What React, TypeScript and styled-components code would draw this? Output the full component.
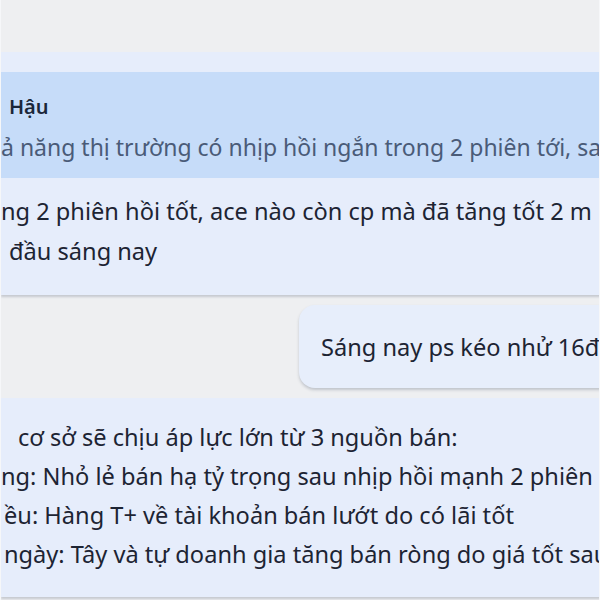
import React from "react";
import styled, { createGlobalStyle } from "styled-components";

const GlobalStyle = createGlobalStyle`
  html, body {
    margin: 0;
    padding: 0;
    background: #eeeff1;
    overflow: hidden;
  }
  body {
    font-family: "Noto Sans", "Open Sans", sans-serif;
    color: #1d2433;
  }
`;

const Page = styled.div`
  width: 600px;
  height: 600px;
  overflow: hidden;
  display: flex;
  flex-direction: column;
  gap: 10px;
  padding-top: 52px;
  box-sizing: border-box;
  background: #eeeff1;
  border-left: 1px solid #f6f7f9;
  border-right: 1px solid #f6f7f9;
`;

const Bubble = styled.div<{ $top: number; $bottom: number }>`
  width: 640px;
  flex-shrink: 0;
  background: #e6edfb;
  padding: ${(p) => p.$top}px 0 ${(p) => p.$bottom}px 0;
  box-shadow: 0 2px 2px rgba(60, 70, 90, 0.22);
  white-space: nowrap;
  overflow: hidden;
`;

const Quote = styled.div`
  background: #c6dcf9;
  padding: 22px 0 14px 0;
  display: flex;
  flex-direction: column;
  gap: 10px;
`;

const QuoteName = styled.div`
  font-size: 20px;
  font-weight: 600;
  line-height: 26px;
  color: #1b273a;
  padding-left: 8px;
`;

const QuoteText = styled.div`
  font-size: 23px;
  line-height: 34px;
  color: #4a5b78;
`;

const Body = styled.div<{ $pad: number; $lh: number }>`
  padding-top: ${(p) => p.$pad}px;
  display: flex;
  flex-direction: column;
  line-height: ${(p) => p.$lh}px;
`;

const Line = styled.div<{ $indent?: number }>`
  font-size: 23.6px;
  color: #1d2433;
  padding-left: ${(p) => p.$indent ?? 0}px;
`;

const SentRow = styled.div`
  display: flex;
  padding-left: 298px;
  flex-shrink: 0;
`;

const SentBubble = styled.div`
  width: 360px;
  height: 83px;
  flex-shrink: 0;
  background: #e7eefb;
  border-radius: 16px;
  box-shadow: 0 2px 3px rgba(60, 70, 90, 0.25);
  display: flex;
  align-items: center;
  padding-left: 22px;
  box-sizing: border-box;
  white-space: nowrap;
  overflow: hidden;
  line-height: 38px;
`;

export default function App() {
  return (
    <>
      <GlobalStyle />
      <Page>
        <Bubble $top={20} $bottom={24}>
          <Quote>
            <QuoteName>Hậu</QuoteName>
            <QuoteText>ả năng thị trường có nhịp hồi ngắn trong 2 phiên tới, sau</QuoteText>
          </Quote>
          <Body $pad={13} $lh={40}>
            <Line>ng 2 phiên hồi tốt, ace nào còn cp mà đã tăng tốt 2 m</Line>
            <Line $indent={8}>đầu sáng nay</Line>
          </Body>
        </Bubble>
        <SentRow>
          <SentBubble>
            <Line>Sáng nay ps kéo nhử 16đ</Line>
          </SentBubble>
        </SentRow>
        <Bubble $top={20} $bottom={23}>
          <Body $pad={0} $lh={39}>
            <Line $indent={17}>cơ sở sẽ chịu áp lực lớn từ 3 nguồn bán:</Line>
            <Line>ng: Nhỏ lẻ bán hạ tỷ trọng sau nhịp hồi mạnh 2 phiên</Line>
            <Line $indent={3}>ều: Hàng T+ về tài khoản bán lướt do có lãi tốt</Line>
            <Line $indent={3}>ngày: Tây và tự doanh gia tăng bán ròng do giá tốt sau</Line>
          </Body>
        </Bubble>
      </Page>
    </>
  );
}
